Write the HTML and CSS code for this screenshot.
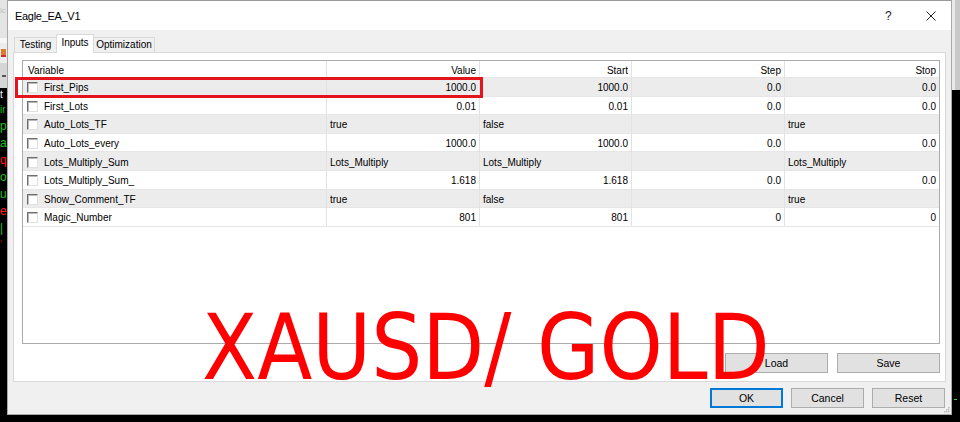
FILE: index.html
```html
<!DOCTYPE html>
<html>
<head>
<meta charset="utf-8">
<title>Eagle_EA_V1</title>
<link rel="stylesheet" href="styles.css">
</head>
<body>
<div class="screen">
  <div class="left-strip">
    <div class="ls-top"><span class="ls-faint">ic</span></div>
    <div class="ls-white"></div>
    <div class="ls-icon"><span class="ls-ico"></span></div>
    <div class="ls-gray"><span class="ls-dash"></span></div>
    <div class="ls-chart">
      <span class="ch w">t</span>
      <span class="ch g">ir</span>
      <span class="ch g">p</span>
      <span class="ch g">a</span>
      <span class="ch r">q</span>
      <span class="ch g">o</span>
      <span class="ch g">u</span>
      <span class="ch r">e</span>
      <span class="ch g">|</span>
      <span class="ch dr">'</span>
    </div>
  </div>

  <div class="dialog">
    <div class="titlebar">
      <span class="title">Eagle_EA_V1</span>
      <span class="help">?</span>
      <svg class="close" width="10" height="10" viewBox="0 0 10 10"><path d="M0.5 0.5 L9.5 9.5 M9.5 0.5 L0.5 9.5" stroke="#222" stroke-width="1" fill="none"/></svg>
    </div>
    <div class="body">
      <div class="tabs">
        <div class="tab t-testing">Testing</div>
        <div class="tab t-inputs active">Inputs</div>
        <div class="tab t-opt">Optimization</div>
      </div>
      <div class="panel">
        <div class="list">
          <table class="grid">
            <colgroup>
              <col class="c1"><col class="c2"><col class="c3"><col class="c4"><col class="c5">
            </colgroup>
            <thead>
              <tr class="head">
                <th class="l var">Variable</th><th class="r">Value</th><th class="r">Start</th><th class="r">Step</th><th class="r">Stop</th>
              </tr>
            </thead>
            <tbody>
              <tr class="odd"><td class="var"><span class="cb"></span>First_Pips</td><td class="r">1000.0</td><td class="r">1000.0</td><td class="r">0.0</td><td class="r">0.0</td></tr>
              <tr><td class="var"><span class="cb"></span>First_Lots</td><td class="r">0.01</td><td class="r">0.01</td><td class="r">0.0</td><td class="r">0.0</td></tr>
              <tr class="odd"><td class="var"><span class="cb"></span>Auto_Lots_TF</td><td class="l">true</td><td class="l">false</td><td></td><td class="l">true</td></tr>
              <tr><td class="var"><span class="cb"></span>Auto_Lots_every</td><td class="r">1000.0</td><td class="r">1000.0</td><td class="r">0.0</td><td class="r">0.0</td></tr>
              <tr class="odd"><td class="var"><span class="cb"></span>Lots_Multiply_Sum</td><td class="l">Lots_Multiply</td><td class="l">Lots_Multiply</td><td></td><td class="l">Lots_Multiply</td></tr>
              <tr><td class="var"><span class="cb"></span>Lots_Multiply_Sum_</td><td class="r">1.618</td><td class="r">1.618</td><td class="r">0.0</td><td class="r">0.0</td></tr>
              <tr class="odd"><td class="var"><span class="cb"></span>Show_Comment_TF</td><td class="l">true</td><td class="l">false</td><td></td><td class="l">true</td></tr>
              <tr><td class="var"><span class="cb"></span>Magic_Number</td><td class="r">801</td><td class="r">801</td><td class="r">0</td><td class="r">0</td></tr>
            </tbody>
          </table>
        </div>
        <div class="load-row">
          <button class="btn wide">Load</button>
          <button class="btn wide">Save</button>
        </div>
      </div>
      <div class="footer">
        <button class="btn std ok">OK</button>
        <button class="btn std">Cancel</button>
        <button class="btn std">Reset</button>
      </div>
    </div>
    <svg class="grip" width="6" height="6" viewBox="0 0 6 6"><rect x="4" y="0" width="1.5" height="1.5" fill="#bdbdbd"/><rect x="2" y="2" width="1.5" height="1.5" fill="#bdbdbd"/><rect x="4" y="2" width="1.5" height="1.5" fill="#bdbdbd"/><rect x="0" y="4" width="1.5" height="1.5" fill="#bdbdbd"/><rect x="2" y="4" width="1.5" height="1.5" fill="#bdbdbd"/><rect x="4" y="4" width="1.5" height="1.5" fill="#bdbdbd"/></svg>
  </div>

  <div class="right-strip">
    <div class="rs-top"></div>
    <div class="rs-black"><span class="rs-tick"></span></div>
  </div>

  <div class="highlight"></div>
  <div class="watermark">XAUSD/ GOLD</div>
</div>
</body>
</html>
```
FILE: styles.css
```css
html, body {
  margin: 0;
  padding: 0;
  background: #000;
}

.screen {
  position: relative;
  width: 960px;
  height: 422px;
  background: #000;
  display: flex;
  align-items: flex-start;
  overflow: hidden;
  font-family: "Liberation Sans", Arial, sans-serif;
  font-size: 10px;
  color: #000;
}

/* ---------- left strip (app behind) ---------- */
.left-strip {
  flex: none;
  width: 7px;
  height: 422px;
  display: flex;
  flex-direction: column;
  overflow: hidden;
  background: #000;
}
.ls-top {
  height: 38px;
  background: #e4e4e4;
  overflow: hidden;
}
.ls-faint {
  display: block;
  margin: 6px 0 0 0;
  font-size: 8px;
  line-height: 10px;
  color: #bcbcbc;
}
.ls-white { height: 5px; background: #f6f6f6; }
.ls-icon {
  height: 20px;
  background: #ededed;
  display: flex;
  align-items: center;
}
.ls-ico {
  display: block;
  width: 5px;
  height: 6px;
  margin-left: 1px;
  background: #e07a2e;
  border-bottom: 2px solid #c83020;
}
.ls-gray {
  height: 25px;
  background: #d6d6d6;
  display: flex;
  align-items: center;
}
.ls-dash {
  display: block;
  width: 4px;
  height: 2px;
  margin-left: 2px;
  background: #555;
}
.ls-chart {
  flex: 1;
  background: #000;
  display: flex;
  flex-direction: column;
  padding-top: 1px;
}
.ch {
  display: block;
  height: 17px;
  line-height: 17px;
  font-size: 12px;
  white-space: nowrap;
}
.ch.w { color: #fff; font-size: 10px; height: 12px; line-height: 12px; }
.ch.g { color: #19c019; }
.ch.g:nth-child(2) { font-size: 10px; }
.ch.r { color: #ff1a1a; }
.ch.dr { color: #8a1010; }

/* ---------- dialog ---------- */
.dialog {
  position: relative;
  flex: none;
  width: 945px;
  height: 415px;
  box-sizing: border-box;
  border: 1px solid #a8a8a8;
  border-top-color: #9a9a9a;
  background: #f0f0f0;
  display: flex;
  flex-direction: column;
}

.titlebar {
  flex: none;
  height: 29px;
  background: #fff;
  display: flex;
  align-items: center;
  padding-left: 7px;
}
.title {
  flex: 1;
  font-size: 11px;
  letter-spacing: -0.3px;
  color: #000;
}
.help {
  width: 8px;
  font-size: 12px;
  color: #222;
  margin-right: 33px;
}
.close {
  display: block;
  margin-right: 15px;
}

.body {
  flex: 1;
  display: flex;
  flex-direction: column;
  padding: 4px 5px 0 5px;
}

.tabs {
  display: flex;
  align-items: flex-end;
  padding-left: 1px;
  height: 18px;
}
.tab {
  box-sizing: border-box;
  height: 15px;
  line-height: 13px;
  text-align: center;
  border: 1px solid #d9d9d9;
  border-bottom: none;
  background: #f0f0f0;
  font-size: 10px;
  color: #000;
}
.t-testing { width: 42px; border-right: none; }
.t-inputs { width: 38px; }
.t-opt { width: 61px; border-left: none; }
.tab.active {
  position: relative;
  z-index: 1;
  height: 19px;
  line-height: 15px;
  margin-bottom: -1px;
  background: #fff;
}

.panel {
  flex: none;
  height: 330px;
  box-sizing: border-box;
  border: 1px solid #d9d9d9;
  background: #fff;
  padding: 7px 5px 8px 8px;
  display: flex;
  flex-direction: column;
}

.list {
  height: 284px;
  box-sizing: border-box;
  border: 1px solid #ababab;
  background: #fff;
  overflow: hidden;
}

.grid {
  width: 916px;
  table-layout: fixed;
  border-collapse: separate;
  border-spacing: 0;
}
.c1 { width: 304px; }
.c2 { width: 153px; }
.c3 { width: 152px; }
.c4 { width: 153px; }
.c5 { width: 154px; }

.grid th, .grid td {
  box-sizing: border-box;
  padding: 2px 3px 0 3px;
  border-right: 1px solid #e2e2e2;
  border-bottom: 1px solid #e6e6e6;
  font-weight: normal;
  font-size: 10px;
  white-space: nowrap;
  overflow: hidden;
  vertical-align: middle;
  color: #000;
}
.grid th:last-child, .grid td:last-child { border-right: none; }
.grid tr.head { height: 17px; }
.grid tr.head th { border-bottom: 1px solid #e6e6e6; }
.grid tbody tr { height: 18.6px; }
.grid tr.odd td { background: #ececec; }
.grid .r { text-align: right; }
.grid .l { text-align: left; }
.grid th.var { padding-left: 5px; text-align: left; }
.grid td.var { padding-left: 4px; text-align: left; }

.cb {
  display: inline-block;
  box-sizing: border-box;
  width: 11px;
  height: 11px;
  vertical-align: -2px;
  margin-right: 6px;
  background: #fff;
  border: 1px solid;
  border-color: #6e6e6e #e0e0e0 #e0e0e0 #6e6e6e;
  box-shadow: inset 1px 1px 0 #b8b8b8;
}

.load-row {
  margin-top: 9px;
  display: flex;
  justify-content: flex-end;
  gap: 9px;
}

.btn {
  box-sizing: border-box;
  height: 20px;
  padding: 0;
  margin: 0;
  background: #e1e1e1;
  border: 1px solid #adadad;
  font-family: "Liberation Sans", Arial, sans-serif;
  font-size: 10.5px;
  color: #000;
}
.btn.wide { width: 103px; }
.btn.std { width: 73px; }
.btn.ok {
  border: 1px solid #0078d7;
  box-shadow: inset 0 0 0 1px #0078d7;
}

.footer {
  display: flex;
  justify-content: flex-end;
  gap: 8px;
  padding-top: 6px;
  padding-right: 1px;
}

.grip {
  position: absolute;
  right: 1px;
  bottom: 1px;
}

/* ---------- right strip ---------- */
.right-strip {
  flex: none;
  width: 8px;
  height: 422px;
  display: flex;
  flex-direction: column;
}
.rs-top {
  height: 90px;
  background: linear-gradient(to right, #e9e9e9 0, #e9e9e9 3px, #c9c9c9 3px);
}
.rs-black {
  flex: 1;
  background: #000;
  display: flex;
  flex-direction: column;
  justify-content: flex-end;
  padding-bottom: 22px;
}
.rs-tick {
  display: block;
  width: 3px;
  height: 1px;
  margin-left: 2px;
  background: #2ecc40;
}

/* ---------- overlays ---------- */
.highlight {
  position: absolute;
  left: 15px;
  top: 77px;
  width: 468px;
  height: 21px;
  box-sizing: border-box;
  border: 3px solid #e3141b;
}

.watermark {
  position: absolute;
  left: 202px;
  top: 309px;
  font-family: "DejaVu Sans", Verdana, sans-serif;
  font-size: 91px;
  line-height: 78px;
  color: #ff0000;
  white-space: pre;
  transform: scaleX(0.885);
  transform-origin: left top;
}
```
